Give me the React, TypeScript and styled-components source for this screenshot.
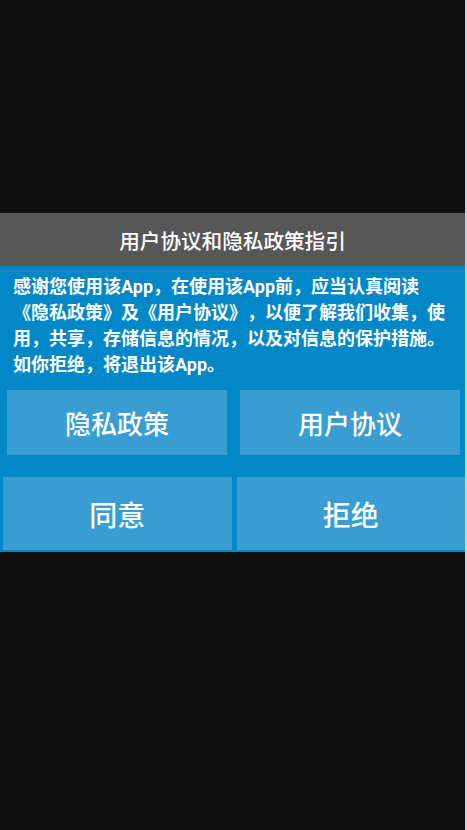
import React from 'react';
import styled, { createGlobalStyle } from 'styled-components';

const GlobalStyle = createGlobalStyle`
  html, body {
    margin: 0;
    padding: 0;
    background: #111111;
  }
  body {
    font-family: Roboto, "Noto Sans CJK SC", "Noto Sans", sans-serif;
    text-spacing-trim: space-all;
  }
`;

const Page = styled.div`
  display: flex;
  width: 467px;
  height: 830px;
  overflow: hidden;
`;

const Screen = styled.div`
  flex: 1;
  background: #111111;
  padding-top: 213px;
`;

const EdgeStrip = styled.div`
  width: 2px;
  background: #cfd2d4;
`;

const Dialog = styled.div`
  width: 465px;
  display: flex;
  flex-direction: column;
`;

const TitleBar = styled.div`
  height: 53px;
  background: #575757;
  color: #ffffff;
  font-size: 20.6px;
  font-weight: 500;
  display: flex;
  align-items: center;
  justify-content: center;
`;

const Body = styled.div`
  background: #0288c8;
  padding: 8px 0 2px;
`;

const Message = styled.p`
  margin: 0;
  padding: 0 13px;
  color: #ffffff;
  font-size: 18px;
  font-weight: 700;
  line-height: 26px;
  text-spacing-trim: space-all;
`;

const ButtonRow = styled.div<{ $top: number; $left: number; $right: number; $gap: number }>`
  display: grid;
  grid-template-columns: 1fr 1fr;
  gap: ${(p) => p.$gap}px;
  margin-top: ${(p) => p.$top}px;
  padding: 0 ${(p) => p.$right}px 0 ${(p) => p.$left}px;
`;

const ActionButton = styled.button<{ $height: number; $size: number }>`
  height: ${(p) => p.$height}px;
  border: none;
  background: #379dd2;
  color: #ffffff;
  font-family: inherit;
  font-size: ${(p) => p.$size}px;
  font-weight: 500;
  padding: 0;
  cursor: pointer;
`;

export default function App() {
  return (
    <>
      <GlobalStyle />
      <Page>
        <Screen>
          <Dialog>
            <TitleBar>用户协议和隐私政策指引</TitleBar>
            <Body>
              <Message>
                感谢您使用该App，在使用该App前，应当认真阅读《隐私政策》及《用户协议》，以便了解我们收集，使用，共享，存储信息的情况，以及对信息的保护措施。如你拒绝，将退出该App。
              </Message>
              <ButtonRow $top={12} $left={7} $right={5} $gap={13}>
                <ActionButton $height={65} $size={26}>隐私政策</ActionButton>
                <ActionButton $height={65} $size={26}>用户协议</ActionButton>
              </ButtonRow>
              <ButtonRow $top={22} $left={3} $right={0} $gap={5}>
                <ActionButton $height={73} $size={28}>同意</ActionButton>
                <ActionButton $height={73} $size={28}>拒绝</ActionButton>
              </ButtonRow>
            </Body>
          </Dialog>
        </Screen>
        <EdgeStrip />
      </Page>
    </>
  );
}
